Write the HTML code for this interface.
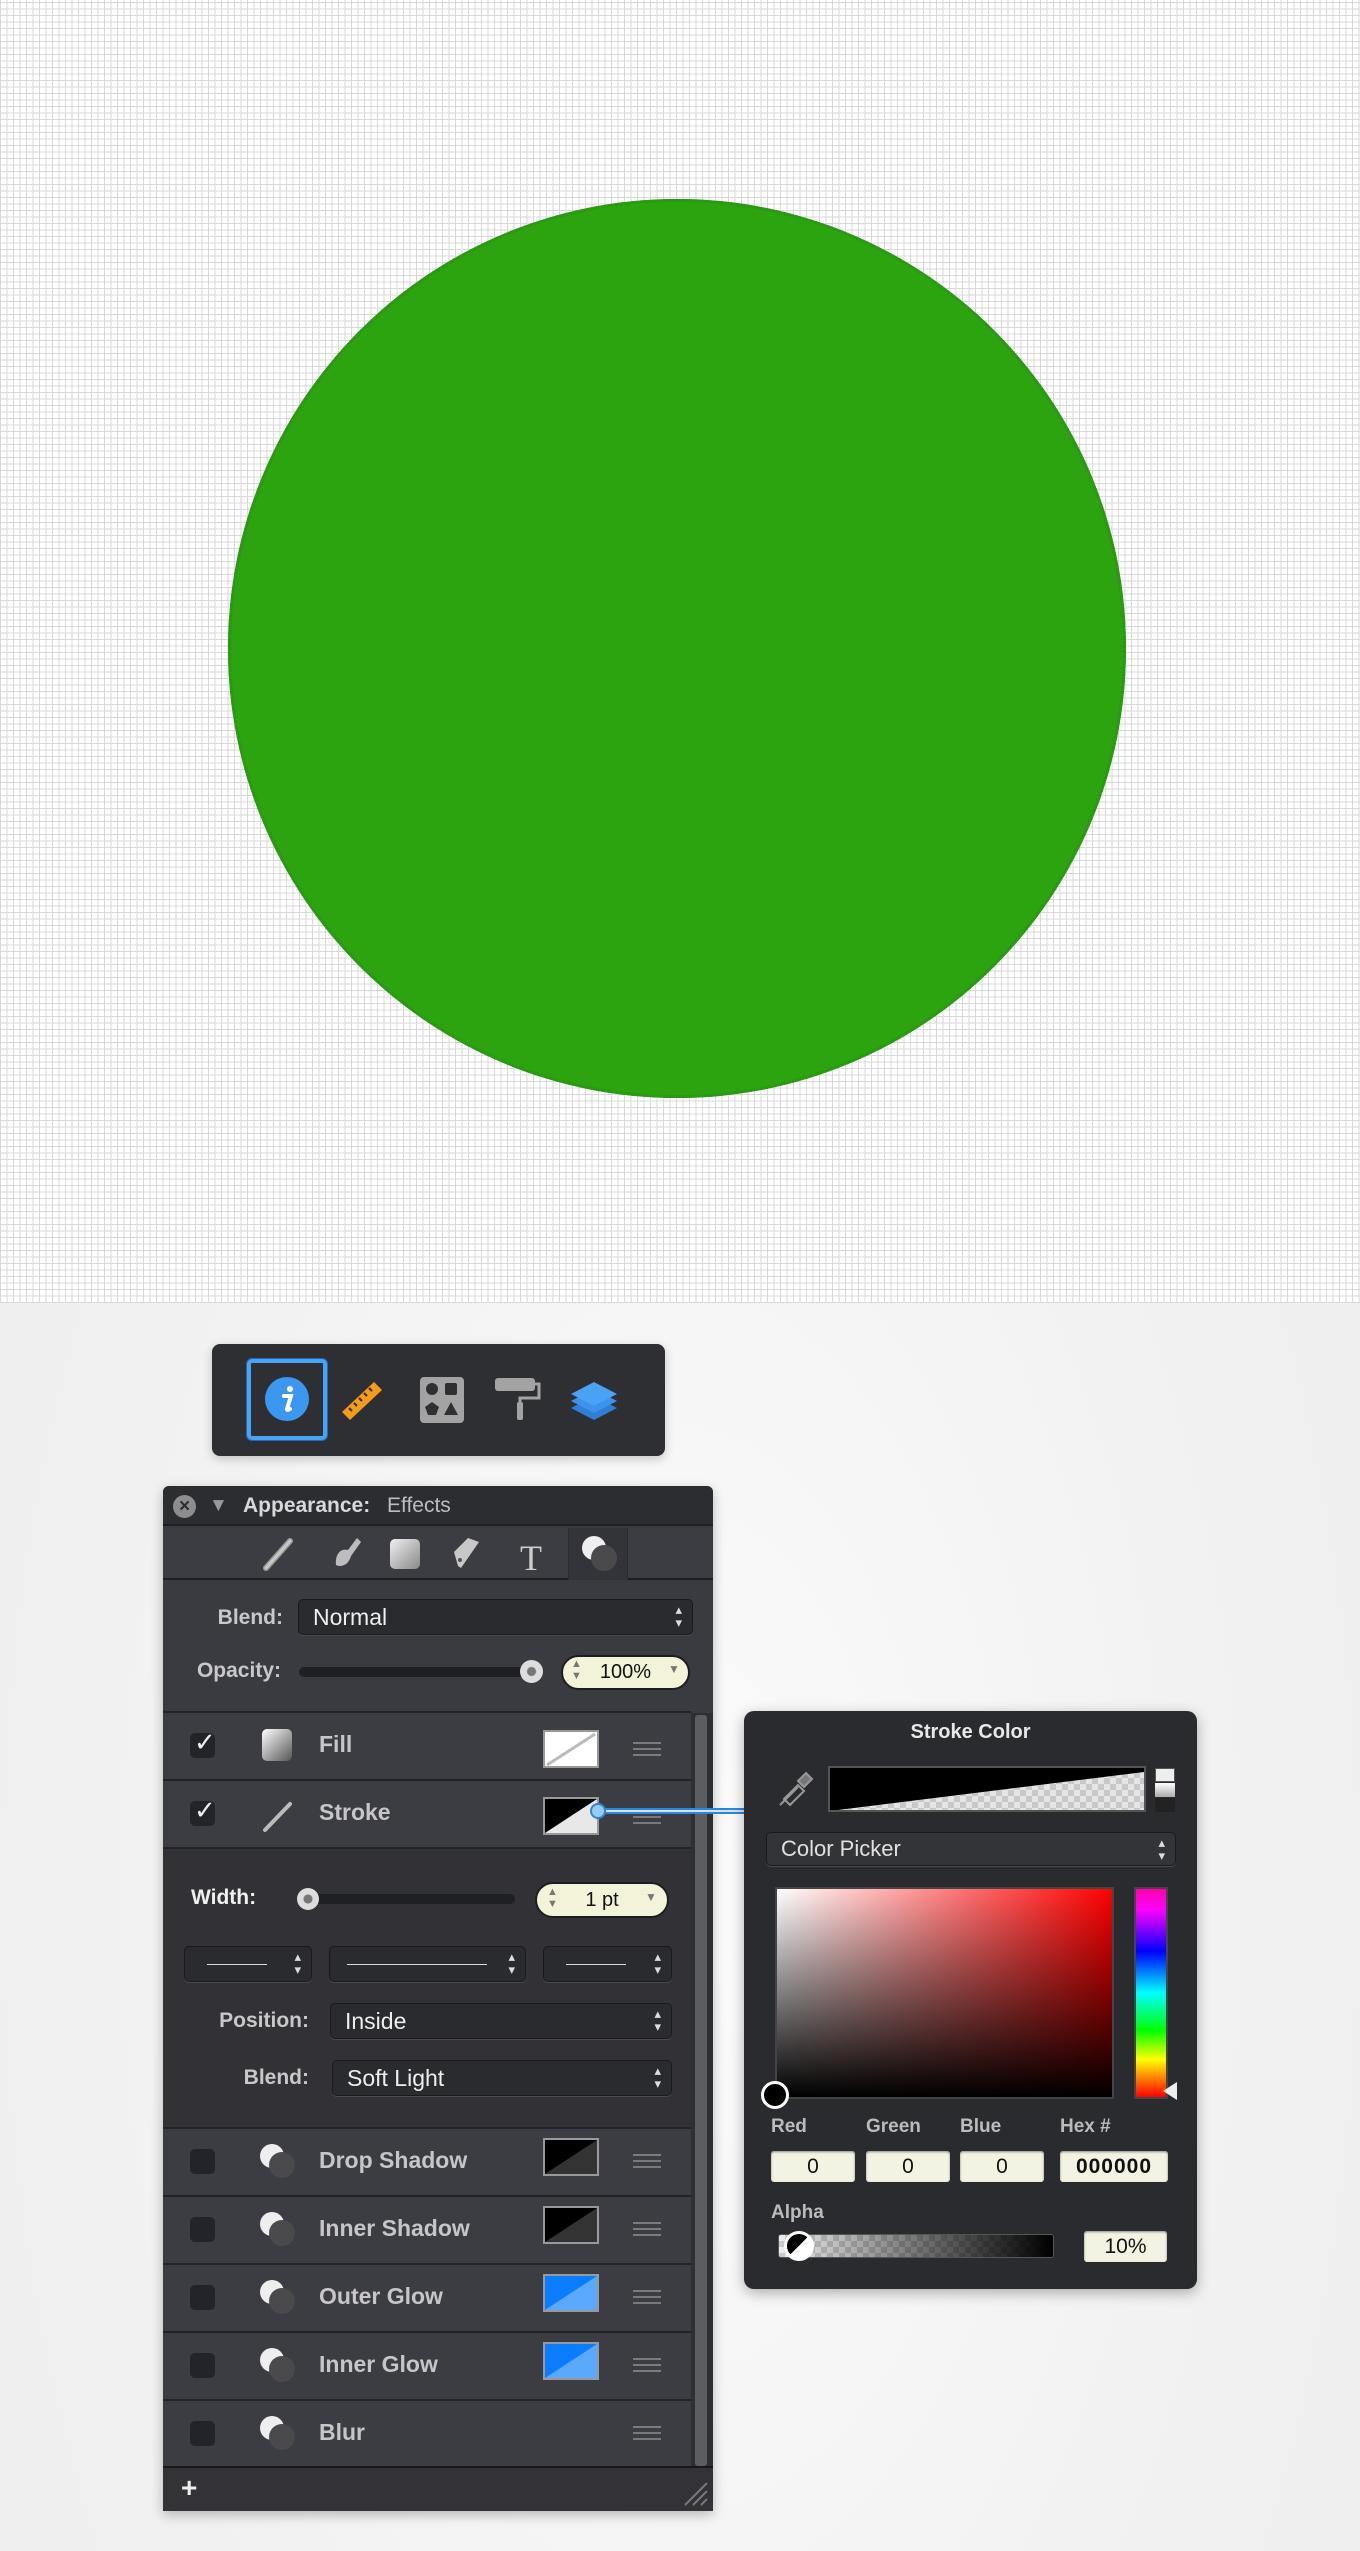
<!DOCTYPE html>
<html><head><meta charset="utf-8"><style>
*{margin:0;padding:0;box-sizing:border-box}
body{width:1360px;height:2551px;position:relative;overflow:hidden;font-family:"Liberation Sans",sans-serif;background:radial-gradient(ellipse 700px 1300px at 680px 1900px,#fbfbfb,#efefef)}
.a{position:absolute}
#canvas{left:0;top:0;width:1360px;height:1303px;background-color:#fff;background-image:repeating-linear-gradient(90deg,#d9d9d9 0 1px,transparent 1px 6.5px),repeating-linear-gradient(0deg,#d9d9d9 0 1px,transparent 1px 6.5px)}
#circle{left:228px;top:199px;width:898px;height:899px;border-radius:50%;background:#2ca410;box-shadow:inset 0 0 0 3px #2a9a12}
.dark{background:#2e2f33}
.lbl{color:#c8c8ca;font-weight:bold;font-size:21px}
.row{left:0;width:528px;height:68px;background:#3c3d42;border-top:2px solid #222326}
.cb{left:27px;width:25px;height:25px;border-radius:5px;background:#232429}
.name{left:156px;color:#c6c6c8;font-weight:bold;font-size:23px}
.sw{left:380px;width:55px;height:35px;border:2px solid #9a9a9a}
.hb{left:470px;width:28px;height:14px;border-top:2px solid #7a7a7c;border-bottom:2px solid #7a7a7c}
.hb:after{content:"";position:absolute;left:0;right:0;top:4px;border-top:2px solid #7a7a7c}
.dd{height:36px;border-radius:5px;background:#2a2b2f;border:1px solid #1a1a1c;box-shadow:0 1px 0 #4a4b50;color:#eee;font-size:23px;line-height:34px;padding-left:14px}
.dd:after{content:"▴\A▾";white-space:pre;position:absolute;right:10px;top:3px;font-size:13px;line-height:13px;color:#ddd}
.fld{height:31px;background:#f2f3e2;border-radius:3px;color:#111;font-size:21px;text-align:center;line-height:31px;box-shadow:inset 0 1px 2px #888}
</style></head><body>
<div id="canvas" class="a"></div>
<div id="circle" class="a"></div>

<div class="a dark" style="left:212px;top:1344px;width:453px;height:112px;border-radius:8px;box-shadow:0 3px 10px rgba(0,0,0,.2)">
 <div class="a" style="left:35px;top:15px;width:80px;height:81px;border:4px solid #4aa2f5;border-radius:5px;box-shadow:0 0 0 1px #1d6bc0"></div>
 <svg class="a" style="left:50px;top:30px" width="50" height="50"><circle cx="25" cy="25" r="22" fill="#3b97ef"/><circle cx="28" cy="15" r="3" fill="#fff"/><path d="M22 22h7l-4 13q0 2 3 0" stroke="#fff" stroke-width="4" fill="none" stroke-linecap="round"/></svg>
 <svg class="a" style="left:125px;top:30px" width="50" height="50"><path d="M5 38 L37 8 L45 16 L13 46Z" fill="#f39b1b"/><path d="M12 34l3 3M17 29l3 3M22 24l3 3M27 19l3 3M32 14l3 3" stroke="#2e2f33" stroke-width="2"/></svg>
 <svg class="a" style="left:205px;top:30px" width="50" height="50"><rect x="3" y="3" width="44" height="46" rx="4" fill="#a3a3a3"/><circle cx="15" cy="15" r="6" fill="#2e2f33"/><rect x="28" y="9" width="12" height="12" rx="2" fill="#2e2f33"/><path d="M15 28l7 5-3 8h-8l-3-8z" fill="#2e2f33"/><path d="M34 28l7 13h-14z" fill="#2e2f33"/></svg>
 <svg class="a" style="left:280px;top:30px" width="50" height="50"><rect x="3" y="4" width="40" height="13" rx="3" fill="#a3a3a3"/><path d="M43 10h4v14h-19v6" stroke="#a3a3a3" stroke-width="3" fill="none"/><rect x="25" y="28" width="6" height="18" rx="2" fill="#a3a3a3"/></svg>
 <svg class="a" style="left:355px;top:30px" width="55" height="50"><path d="M27 32l-23-12 23-12 23 12z" fill="#2e7fd6" transform="translate(0,14)"/><path d="M27 32l-23-12 23-12 23 12z" fill="#3d93ec" transform="translate(0,7)"/><path d="M27 32l-23-12 23-12 23 12z" fill="#4aa2f5"/></svg>
</div>

<div class="a" style="left:163px;top:1486px;width:550px;height:1025px;background:#3a3b40;border-radius:6px 6px 0 0;box-shadow:0 4px 12px rgba(0,0,0,.25);overflow:hidden">
 <div class="a" style="left:0;top:0;width:550px;height:40px;background:#2c2d31;border-bottom:2px solid #1e1f22"></div>
 <div class="a" style="left:10px;top:9px;width:23px;height:23px;border-radius:50%;background:#8d8d8f;color:#2c2d31;font-weight:bold;font-size:19px;line-height:23px;text-align:center">×</div>
 <div class="a" style="left:46px;top:9px;color:#9a9a9c;font-size:19px">▼</div>
 <div class="a" style="left:80px;top:8px;color:#d8d8da;font-weight:bold;font-size:21px">Appearance:</div>
 <div class="a" style="left:224px;top:8px;color:#bdbdbf;font-size:21px">Effects</div>
 <div class="a" style="left:0;top:42px;width:550px;height:52px;background:#3c3d42;border-bottom:2px solid #1e1f22"></div>
 <div class="a" style="left:405px;top:42px;width:60px;height:52px;background:#333439;border-left:1px solid #2a2b2e;border-right:1px solid #2a2b2e"></div>
 <svg class="a" style="left:0;top:42px" width="550" height="52">
  <path d="M103 40L127 13" stroke="#999" stroke-width="6" stroke-linecap="round"/><path d="M103 40L127 13" stroke="#c8c8c8" stroke-width="3" stroke-linecap="round"/>
  <path d="M194 10l-9 12c-8-2-13 5-12 15 6 3 13-1 15-9l10-14z" fill="#bdbdbd"/>
  <defs><linearGradient id="sq" x1="0" y1="0" x2="1" y2="1"><stop offset="0" stop-color="#f0f0f0"/><stop offset="1" stop-color="#888"/></linearGradient></defs>
  <rect x="227" y="11" width="30" height="30" rx="5" fill="url(#sq)"/>
  <path d="M295 38l-4-14 14-14 11 4 0 0-18 26z" fill="#c8c8c8" transform="rotate(0)"/><circle cx="297" cy="32" r="2" fill="#555"/>
  <text x="357" y="42" font-family="Liberation Serif" font-size="36" fill="#ccc">T</text>
  <circle cx="431" cy="20" r="12" fill="#eee"/><circle cx="441" cy="30" r="13" fill="#4a4a4d"/>
 </svg>
 <div class="a lbl" style="left:0;top:120px;width:120px;text-align:right">Blend:</div>
 <div class="a dd" style="left:135px;top:113px;width:395px">Normal</div>
 <div class="a lbl" style="left:0;top:173px;width:118px;text-align:right">Opacity:</div>
 <div class="a" style="left:136px;top:181px;width:236px;height:10px;border-radius:5px;background:#1f2023"></div>
 <div class="a" style="left:357px;top:174px;width:23px;height:23px;border-radius:50%;background:radial-gradient(#777 0 4px,#ddd 5px)"></div>
 <div class="a" style="left:398px;top:169px;width:129px;height:35px;border-radius:18px;background:#f2f3d8;border:2px solid #1c1d20;color:#111;font-size:20px;line-height:31px;text-align:center">100%</div>
 <div class="a" style="left:408px;top:172px;color:#777;font-size:11px;line-height:12px">▲<br>▼</div>
 <div class="a" style="left:505px;top:176px;color:#777;font-size:12px">▼</div>

 <div class="a row" style="top:225px"></div>
 <div class="a row" style="top:293px"></div>
 <div class="a" style="left:0;top:361px;width:528px;height:280px;background:#323236;border-top:2px solid #222326"></div>
 <div class="a row" style="top:641px"></div>
 <div class="a row" style="top:709px"></div>
 <div class="a row" style="top:777px"></div>
 <div class="a row" style="top:845px"></div>
 <div class="a row" style="top:913px"></div>
 <div class="a" style="left:0;top:980px;width:550px;height:45px;background:#323237;border-top:2px solid #18191b"></div>
 <div class="a" style="left:18px;top:986px;color:#eee;font-size:28px;font-weight:bold">+</div>
 <div class="a" style="left:528px;top:227px;width:22px;height:753px;background:#2e2f33"></div>
 <div class="a" style="left:532px;top:229px;width:12px;height:751px;background:#5c5d61;border-radius:3px"></div>

 <div class="a cb" style="top:247px"></div><div class="a" style="left:31px;top:241px;color:#eee;font-size:26px">✓</div>
 <div class="a" style="left:99px;top:243px;width:30px;height:32px;border-radius:5px;background:linear-gradient(135deg,#fff,#555)"></div>
 <div class="a name" style="top:245px">Fill</div>
 <svg class="a" style="left:380px;top:244px" width="56" height="38"><rect x="1" y="1" width="54" height="36" fill="#fff" stroke="#999" stroke-width="2"/><path d="M4 35L52 4" stroke="#bbb" stroke-width="3"/></svg>
 <div class="a hb" style="top:256px"></div>
 <div class="a cb" style="top:315px"></div><div class="a" style="left:31px;top:309px;color:#eee;font-size:26px">✓</div>
 <svg class="a" style="left:95px;top:310px" width="40" height="40"><path d="M7 34L32 8" stroke="#bbb" stroke-width="4" stroke-linecap="round"/></svg>
 <div class="a name" style="top:313px">Stroke</div>
 <svg class="a" style="left:380px;top:311px" width="56" height="38"><rect x="1" y="1" width="54" height="36" fill="#e8e8e8" stroke="#999" stroke-width="2"/><path d="M2 36L2 2 54 2z" fill="#000"/></svg>
 <div class="a hb" style="top:324px"></div>

 <div class="a" style="left:28px;top:400px;color:#f0f0f2;font-weight:bold;font-size:21px">Width:</div>
 <div class="a" style="left:140px;top:408px;width:212px;height:10px;border-radius:5px;background:#1f2023"></div>
 <div class="a" style="left:134px;top:402px;width:22px;height:22px;border-radius:50%;background:radial-gradient(#777 0 4px,#ddd 5px)"></div>
 <div class="a" style="left:372px;top:396px;width:134px;height:36px;border-radius:18px;background:#f2f3d8;border:2px solid #1c1d20;color:#111;font-size:20px;line-height:32px;text-align:center">1 pt</div>
 <div class="a" style="left:384px;top:400px;color:#777;font-size:11px;line-height:12px">▲<br>▼</div>
 <div class="a" style="left:482px;top:404px;color:#777;font-size:12px">▼</div>
 <div class="a dd" style="left:21px;top:460px;width:128px"><div class="a" style="left:22px;top:17px;width:60px;border-top:1px solid #ddd"></div></div>
 <div class="a dd" style="left:166px;top:460px;width:197px"><div class="a" style="left:17px;top:17px;width:140px;border-top:1px solid #ddd"></div></div>
 <div class="a dd" style="left:380px;top:460px;width:129px"><div class="a" style="left:22px;top:17px;width:60px;border-top:1px solid #ddd"></div></div>
 <div class="a lbl" style="left:0;top:523px;width:146px;text-align:right">Position:</div>
 <div class="a dd" style="left:167px;top:517px;width:342px">Inside</div>
 <div class="a lbl" style="left:0;top:580px;width:146px;text-align:right">Blend:</div>
 <div class="a dd" style="left:169px;top:574px;width:340px">Soft Light</div>

 <div class="a cb" style="top:663px"></div><div class="a name" style="top:661px">Drop Shadow</div>
 <div class="a cb" style="top:731px"></div><div class="a name" style="top:729px">Inner Shadow</div>
 <div class="a cb" style="top:799px"></div><div class="a name" style="top:797px">Outer Glow</div>
 <div class="a cb" style="top:867px"></div><div class="a name" style="top:865px">Inner Glow</div>
 <div class="a cb" style="top:935px"></div><div class="a name" style="top:933px">Blur</div>
 <svg class="a" style="left:94px;top:655px" width="44" height="330">
  <g id="g"><circle cx="15" cy="15" r="12" fill="#eee"/><circle cx="25" cy="24" r="13" fill="#4a4a4d"/></g>
  <use href="#g" y="68"/><use href="#g" y="136"/><use href="#g" y="204"/><use href="#g" y="272"/>
 </svg>
 <svg class="a" style="left:380px;top:652px" width="56" height="250">
  <rect x="1" y="1" width="54" height="36" fill="#333" stroke="#999" stroke-width="2"/><path d="M2 36L2 2 54 2z" fill="#000"/>
  <rect x="1" y="69" width="54" height="36" fill="#333" stroke="#999" stroke-width="2"/><path d="M2 104L2 70 54 70z" fill="#000"/>
  <rect x="1" y="137" width="54" height="36" fill="#5aa8ff" stroke="#999" stroke-width="2"/><path d="M2 172L2 138 54 138z" fill="#0a7cff"/>
  <rect x="1" y="205" width="54" height="36" fill="#5aa8ff" stroke="#999" stroke-width="2"/><path d="M2 240L2 206 54 206z" fill="#0a7cff"/>
 </svg>
 <div class="a hb" style="top:668px"></div><div class="a hb" style="top:736px"></div><div class="a hb" style="top:804px"></div><div class="a hb" style="top:872px"></div><div class="a hb" style="top:940px"></div>
 <svg class="a" style="left:520px;top:995px" width="26" height="26"><path d="M2 24L24 2M10 24L24 10M18 24L24 18" stroke="#777" stroke-width="2"/></svg>
</div>

<div class="a" style="left:598px;top:1808px;width:148px;height:6px;border-top:2px solid #2f86d9;border-bottom:2px solid #2f86d9;background:#cfe4f8"></div>
<div class="a" style="left:590px;top:1803px;width:16px;height:16px;border-radius:50%;background:#9ccaf5;border:2px solid #2f86d9"></div>

<div class="a" style="left:744px;top:1711px;width:453px;height:578px;background:#2a2b2f;border-radius:10px;box-shadow:0 4px 14px rgba(0,0,0,.3)">
 <div class="a" style="left:0;top:10px;width:453px;text-align:center;color:#e8e8e8;font-weight:bold;font-size:20px">Stroke Color</div>
 <svg class="a" style="left:30px;top:58px" width="44" height="40"><path d="M6 36l18-18M10 30l14-14 6 6-14 14z" stroke="#999" stroke-width="2" fill="none"/><path d="M24 12l8-8 6 6-8 8z" fill="#777" stroke="#999" stroke-width="2"/></svg>
 <svg class="a" style="left:84px;top:55px" width="318" height="46"><defs><pattern id="ck" width="12" height="12" patternUnits="userSpaceOnUse"><rect width="12" height="12" fill="#e5e5e5"/><rect width="6" height="6" fill="#c8c8c8"/><rect x="6" y="6" width="6" height="6" fill="#c8c8c8"/></pattern></defs><rect x="1" y="1" width="316" height="44" fill="url(#ck)" stroke="#555" stroke-width="2"/><path d="M2 2H316V6L10 44H2z" fill="#000"/></svg>
 <div class="a" style="left:411px;top:57px;width:20px;height:14px;background:#eee;border:1px solid #555"></div>
 <div class="a" style="left:411px;top:72px;width:20px;height:14px;background:linear-gradient(#fff,#aaa)"></div>
 <div class="a" style="left:411px;top:87px;width:20px;height:14px;background:#222"></div>
 <div class="a dd" style="left:22px;top:121px;width:410px;height:34px;color:#e0e0e0;font-size:22px;line-height:32px;background:#333438">Color Picker</div>
 <div class="a" style="left:31px;top:176px;width:339px;height:212px;border:2px solid #444;background:linear-gradient(to top,#000,rgba(0,0,0,0)),linear-gradient(to right,#fff,#f00)"></div>
 <div class="a" style="left:390px;top:176px;width:34px;height:212px;border:2px solid #444;background:linear-gradient(#f0a,#f0f 10%,#00f 30%,#0ff 50%,#0f0 68%,#ff0 82%,#f00)"></div>
 <div class="a" style="left:419px;top:371px;width:0;height:0;border-top:9px solid transparent;border-bottom:9px solid transparent;border-right:14px solid #eee"></div>
 <div class="a" style="left:17px;top:370px;width:28px;height:28px;border-radius:50%;background:#000;border:3px solid #fff"></div>
 <div class="a" style="left:27px;top:405px;color:#bbb;font-weight:bold;font-size:19px">Red</div>
 <div class="a" style="left:122px;top:405px;color:#bbb;font-weight:bold;font-size:19px">Green</div>
 <div class="a" style="left:216px;top:405px;color:#bbb;font-weight:bold;font-size:19px">Blue</div>
 <div class="a" style="left:316px;top:405px;color:#bbb;font-weight:bold;font-size:19px">Hex #</div>
 <div class="a fld" style="left:27px;top:440px;width:84px">0</div>
 <div class="a fld" style="left:122px;top:440px;width:84px">0</div>
 <div class="a fld" style="left:216px;top:440px;width:84px">0</div>
 <div class="a fld" style="left:316px;top:440px;width:108px;font-weight:bold;letter-spacing:1px">000000</div>
 <div class="a" style="left:27px;top:491px;color:#bbb;font-weight:bold;font-size:19px">Alpha</div>
 <div class="a" style="left:34px;top:523px;width:276px;height:24px;border-radius:3px;border:1px solid #555;background:linear-gradient(to right,rgba(0,0,0,0),#000),repeating-conic-gradient(#ccc 0 25%,#eee 0 50%) 0 0/12px 12px"></div>
 <div class="a" style="left:40px;top:520px;width:30px;height:30px;border-radius:50%;border:3px solid #fff;background:linear-gradient(135deg,#000 50%,#fff 50%)"></div>
 <div class="a fld" style="left:340px;top:520px;width:83px">10%</div>
</div>
</body></html>
